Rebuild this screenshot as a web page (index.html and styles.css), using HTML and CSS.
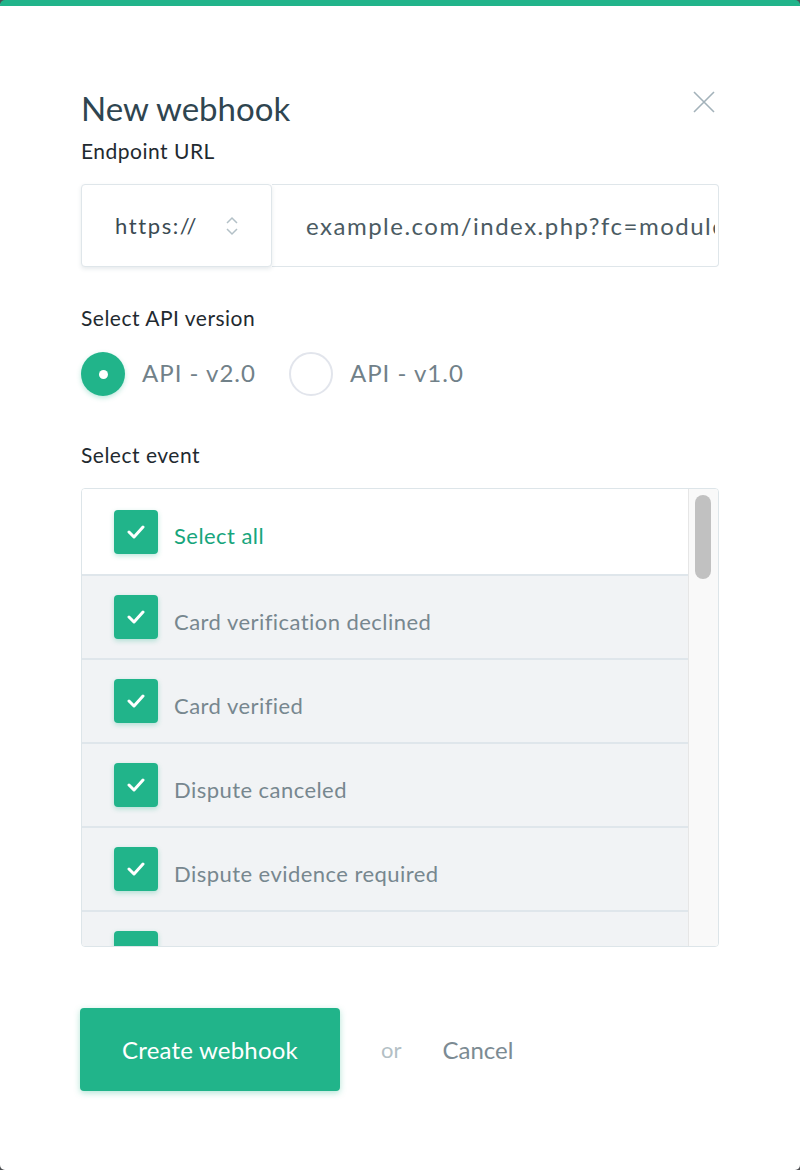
FILE: index.html
```html
<!DOCTYPE html>
<html>
<head>
<meta charset="utf-8">
<link rel="stylesheet" href="styles.css">
</head>
<body>
<div class="modal">
  <div class="head">
    <h1 class="title">New webhook</h1>
    <button class="close" aria-label="Close">
      <svg width="22" height="22" viewBox="0 0 22 22"><path d="M1 1L21 21M21 1L1 21" stroke="#a3b2ba" stroke-width="1.6" fill="none"/></svg>
    </button>
  </div>
  <div class="label">Endpoint URL</div>
  <div class="url-row">
    <div class="proto">
      <span>https://</span>
      <svg width="14" height="20" viewBox="0 0 14 20"><path d="M2 7L7 2L12 7M2 13L7 18L12 13" stroke="#b3c0c7" stroke-width="1.5" fill="none"/></svg>
    </div>
    <div class="url"><span>example.com/index.php?fc=module&amp;module=webhooks</span></div>
  </div>

  <div class="label api-label">Select API version</div>
  <div class="radios">
    <div class="radio on"><span class="dot"></span><span class="rtext">API - v2.0</span></div>
    <div class="radio"><span class="dot"></span><span class="rtext">API - v1.0</span></div>
  </div>

  <div class="label ev-label">Select event</div>
  <div class="events">
    <div class="list">
      <div class="row all"><span class="cb"><svg width="18" height="14" viewBox="0 0 18 14"><path d="M2 7L7 12L16 2" stroke="#fff" stroke-width="3" fill="none" stroke-linecap="round" stroke-linejoin="round"/></svg></span><span class="rl">Select all</span></div>
      <div class="row"><span class="cb"><svg width="18" height="14" viewBox="0 0 18 14"><path d="M2 7L7 12L16 2" stroke="#fff" stroke-width="3" fill="none" stroke-linecap="round" stroke-linejoin="round"/></svg></span><span class="rl">Card verification declined</span></div>
      <div class="row"><span class="cb"><svg width="18" height="14" viewBox="0 0 18 14"><path d="M2 7L7 12L16 2" stroke="#fff" stroke-width="3" fill="none" stroke-linecap="round" stroke-linejoin="round"/></svg></span><span class="rl">Card verified</span></div>
      <div class="row"><span class="cb"><svg width="18" height="14" viewBox="0 0 18 14"><path d="M2 7L7 12L16 2" stroke="#fff" stroke-width="3" fill="none" stroke-linecap="round" stroke-linejoin="round"/></svg></span><span class="rl">Dispute canceled</span></div>
      <div class="row"><span class="cb"><svg width="18" height="14" viewBox="0 0 18 14"><path d="M2 7L7 12L16 2" stroke="#fff" stroke-width="3" fill="none" stroke-linecap="round" stroke-linejoin="round"/></svg></span><span class="rl">Dispute evidence required</span></div>
      <div class="row"><span class="cb"><svg width="18" height="14" viewBox="0 0 18 14"><path d="M2 7L7 12L16 2" stroke="#fff" stroke-width="3" fill="none" stroke-linecap="round" stroke-linejoin="round"/></svg></span><span class="rl">Dispute funds reinstated</span></div>
    </div>
    <div class="scrollbar"><div class="thumb"></div></div>
  </div>

  <div class="actions">
    <button class="primary">Create webhook</button>
    <span class="or">or</span>
    <span class="cancel">Cancel</span>
  </div>
</div>
</body>
</html>
```
FILE: styles.css
```css
* { box-sizing: border-box; }
html, body { margin: 0; padding: 0; }
body {
  background: #4d4f52;
  font-family: Lato, "Open Sans", sans-serif;
}
.modal {
  width: 800px;
  height: 1170px;
  background: #fff;
  border-radius: 5px;
  border-top: 6px solid #21b48a;
  padding: 82px 81px 0 81px;
}
.head {
  display: flex;
  justify-content: space-between;
  align-items: flex-start;
}
.title {
  margin: 0;
  font-weight: 400;
  font-size: 33px;
  line-height: 40px;
  color: #2f4550;
}
.close {
  border: 0;
  background: none;
  padding: 0;
  margin: 3px 4px 0 0;
  width: 22px;
  height: 22px;
}
.label {
  font-size: 21px;
  letter-spacing: 0.5px;
  color: #1f2a30;
  line-height: 24px;
  margin-top: 11px;
}
.url-row {
  display: flex;
  margin-top: 21px;
  height: 83px;
}
.proto {
  width: 191px;
  flex: none;
  border: 1px solid #dfe6ea;
  border-radius: 4px;
  box-shadow: 0 2px 4px rgba(50, 80, 95, 0.12);
  display: flex;
  align-items: center;
  padding: 0 32px 0 33px;
  justify-content: space-between;
  font-size: 22px;
  letter-spacing: 1.6px;
  color: #3b4a52;
  position: relative;
  z-index: 1;
  background: #fff;
}
.url {
  flex: 1;
  border: 1px solid #dfe6ea;
  border-left: 0;
  border-radius: 0 4px 4px 0;
  display: flex;
  align-items: center;
  padding: 0 0 0 34px;
  overflow: hidden;
  white-space: nowrap;
  font-size: 24px;
  letter-spacing: 1.5px;
  color: #4b5b63;
}
.url span { display: block; width: 409px; overflow: hidden; }
.api-label { margin-top: 39px; }
.radios {
  display: flex;
  gap: 33px;
  margin-top: 22px;
}
.radio {
  display: flex;
  align-items: center;
  gap: 17px;
}
.dot {
  width: 44px;
  height: 44px;
  border-radius: 50%;
  border: 2px solid #e2e5ec;
  background: #fff;
  display: flex;
  align-items: center;
  justify-content: center;
}
.radio.on .dot {
  border: 0;
  background: #21b48a;
  box-shadow: 0 2px 5px rgba(33, 180, 138, 0.3);
}
.radio.on .dot::after {
  content: "";
  width: 9px;
  height: 9px;
  border-radius: 50%;
  background: #fff;
}
.rtext {
  font-size: 24px;
  letter-spacing: 1px;
  color: #718189;
  padding-bottom: 4px;
}
.ev-label { margin-top: 47px; }
.events {
  margin-top: 21px;
  height: 459px;
  border: 1px solid #dde5e9;
  border-radius: 4px;
  display: flex;
  overflow: hidden;
}
.list {
  flex: 1;
  overflow: hidden;
}
.row {
  height: 84px;
  flex: none;
  display: flex;
  align-items: center;
  padding-left: 32px;
  gap: 16px;
  background: #f1f3f5;
  border-bottom: 2px solid #dfe6eb;
}
.row.all { background: #fff; height: 87px; }
.cb {
  width: 44px;
  height: 44px;
  border-radius: 4px;
  background: #21b48a;
  box-shadow: 0 2px 5px rgba(33, 180, 138, 0.3);
  display: flex;
  align-items: center;
  justify-content: center;
  flex: none;
}
.rl {
  font-size: 22px;
  letter-spacing: 0.45px;
  color: #77878f;
  padding-top: 8px;
}
.row.all .rl { color: #17a57c; }
.scrollbar {
  width: 30px;
  flex: none;
  background: #f9f9f9;
  border-left: 1px solid #e6e6e6;
  padding: 6px 5px 0 6px;
}
.thumb {
  width: 16px;
  height: 84px;
  border-radius: 8px;
  background: #c1c1c1;
}
.actions {
  display: flex;
  align-items: center;
  margin-top: 61px;
  margin-left: -1px;
}
.primary {
  width: 260px;
  height: 83px;
  border: 0;
  border-radius: 4px;
  background: #21b48a;
  box-shadow: 0 2px 6px rgba(33, 180, 138, 0.35);
  color: #fff;
  font-family: Lato, "Open Sans", sans-serif;
  font-size: 24px;
  letter-spacing: 0.2px;
}
.or {
  margin-left: 41px;
  font-size: 22px;
  color: #b3bfc5;
}
.cancel {
  margin-left: 41px;
  font-size: 24px;
  color: #7c8b93;
}
```
